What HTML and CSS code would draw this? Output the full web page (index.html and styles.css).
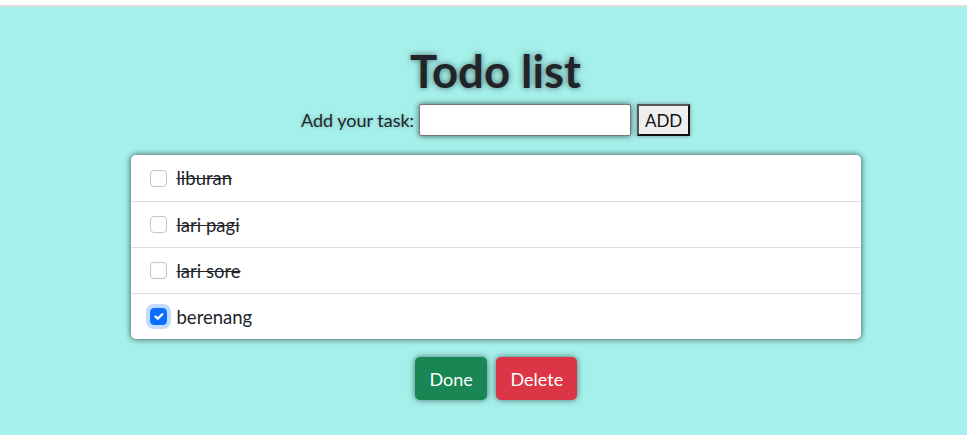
FILE: index.html
```html
<!DOCTYPE html>
<html lang="en">
<head>
<meta charset="utf-8">
<title>Todo list</title>
<link rel="stylesheet" href="styles.css">
</head>
<body>
<div class="topbar"></div>
<main class="page">
  <h1 class="title">Todo list</h1>
  <form class="add-row">
    <label class="add-label" for="task">Add your task:</label>
    <input class="add-input" id="task" type="text">
    <button class="add-btn" type="button">ADD</button>
  </form>
  <ul class="list">
    <li class="item"><input class="check" type="checkbox"><span class="done-text">liburan</span></li>
    <li class="item"><input class="check" type="checkbox"><span class="done-text">lari pagi</span></li>
    <li class="item"><input class="check" type="checkbox"><span class="done-text">lari sore</span></li>
    <li class="item"><input class="check focused" type="checkbox" checked><span>berenang</span></li>
  </ul>
  <div class="actions">
    <button class="btn btn-done" type="button">Done</button>
    <button class="btn btn-delete" type="button">Delete</button>
  </div>
</main>
</body>
</html>
```
FILE: styles.css
```css
* { box-sizing: border-box; }
html, body { margin: 0; padding: 0; }
body {
  background: #a6f0eb;
  font-family: Lato, "Noto Sans", sans-serif;
  color: #212529;
  height: 435px;
  overflow: hidden;
}
.topbar {
  height: 7px;
  background: #fff;
  border-bottom: 2px solid #dcdcdc;
}
.page {
  display: flex;
  flex-direction: column;
  align-items: center;
  padding-left: 24px;
}
.title {
  margin: 36px 0 0;
  font-size: 45.5px;
  font-weight: 700;
  line-height: 56px;
  color: #212529;
  text-shadow: 0 0 6px rgba(0,0,0,0.55);
}
.add-row {
  display: flex;
  align-items: center;
  margin-top: 5px;
  height: 32px;
}
.add-label {
  font-size: 18px;
  margin-right: 5px;
  text-shadow: 0 0 4px rgba(0,0,0,0.25);
}
.add-input {
  width: 212px;
  height: 32px;
  border: 1px solid #767676;
  border-radius: 2px;
  background: #fff;
  box-shadow: 0 0 6px rgba(0,0,0,0.6);
  margin: 0;
}
.add-btn {
  margin-left: 6px;
  height: 32px;
  width: 53px;
  font-family: Lato, sans-serif;
  font-size: 17px;
  color: #111;
  background: #efefef;
  border: 2px solid #111;
  border-top-color: #555;
  border-left-color: #555;
  padding: 0;
  box-shadow: 0 0 4px rgba(0,0,0,0.4);
}
.list {
  list-style: none;
  margin: 19px 0 0;
  padding: 0;
  width: 730px;
  background: #fff;
  border-radius: 5px;
  box-shadow: 0 0 6px rgba(0,0,0,0.7);
  overflow: hidden;
}
.item {
  display: flex;
  align-items: center;
  height: 46px;
  padding: 0 19px;
  font-size: 18.5px;
  border-top: 1px solid #dedede;
}
.item:first-child { border-top: none; height: 46px; }
.check {
  appearance: none;
  -webkit-appearance: none;
  width: 17px;
  height: 17px;
  margin: 0 10px 0 0;
  border: 1px solid #c4c4c4;
  border-radius: 4px;
  background: #fff;
  flex: none;
}
.check:checked {
  background: #0d6efd url("data:image/svg+xml,%3Csvg xmlns='http://www.w3.org/2000/svg' viewBox='0 0 20 20'%3E%3Cpath fill='none' stroke='%23fff' stroke-linecap='round' stroke-linejoin='round' stroke-width='3' d='M6 10l3 3l6-6'/%3E%3C/svg%3E") center/100% no-repeat;
  border-color: #0d6efd;
}
.check.focused {
  box-shadow: 0 0 0 4px rgba(13,110,253,0.25);
}
.done-text { text-decoration: line-through; }
.actions {
  display: flex;
  gap: 9px;
  margin-top: 18px;
}
.btn {
  height: 43px;
  border: none;
  border-radius: 5px;
  color: #fff;
  font-family: Lato, sans-serif;
  font-size: 18px;
  padding: 0 15px;
  box-shadow: 0 0 6px rgba(0,0,0,0.55);
}
.btn-done { background: #198754; width: 72px; }
.btn-delete { background: #dc3545; width: 81px; }
```
